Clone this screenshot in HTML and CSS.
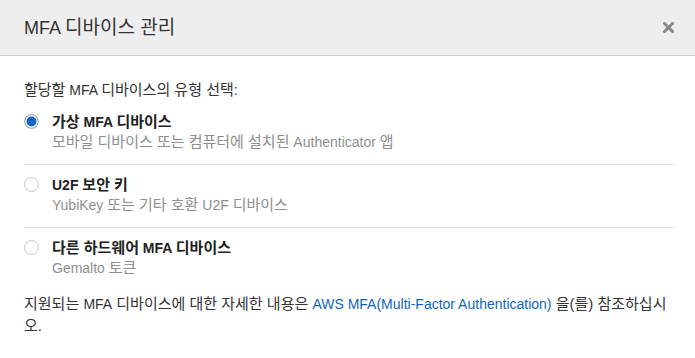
FILE: index.html
```html
<!DOCTYPE html>
<html lang="ko">
<head>
<meta charset="utf-8">
<title>MFA 디바이스 관리</title>
<link rel="stylesheet" href="styles.css">
</head>
<body>
<div class="dialog">
  <div class="header">
    <h1 class="title">MFA <span class="ko">디바이스 관리</span></h1>
    <span class="close" aria-label="닫기">
      <svg width="11" height="11" viewBox="0 0 11 11"><path d="M1.5 1.5 L9.5 9.5 M9.5 1.5 L1.5 9.5" stroke="#888" stroke-width="3" stroke-linecap="square"/></svg>
    </span>
  </div>
  <div class="body">
    <p class="prompt"><span class="ko">할당할</span> MFA <span class="ko">디바이스의 유형 선택</span>:</p>
    <div class="options">
      <label class="option">
        <span class="radio checked"></span>
        <span class="text">
          <span class="label"><span class="ko">가상</span> MFA <span class="ko">디바이스</span></span>
          <span class="desc"><span class="ko">모바일 디바이스 또는 컴퓨터에 설치된</span> Authenticator <span class="ko">앱</span></span>
        </span>
      </label>
      <label class="option">
        <span class="radio"></span>
        <span class="text">
          <span class="label">U2F <span class="ko">보안 키</span></span>
          <span class="desc">YubiKey <span class="ko">또는 기타 호환</span> U2F <span class="ko">디바이스</span></span>
        </span>
      </label>
      <label class="option last">
        <span class="radio"></span>
        <span class="text">
          <span class="label"><span class="ko">다른 하드웨어</span> MFA <span class="ko">디바이스</span></span>
          <span class="desc">Gemalto <span class="ko">토큰</span></span>
        </span>
      </label>
    </div>
    <p class="footer">지원되는 <span class="lat">MFA</span> 디바이스에 대한 자세한 내용은 <a href="#" class="link">AWS MFA(Multi-Factor Authentication)</a> 을(를) 참조하십시오.</p>
  </div>
</div>
</body>
</html>
```
FILE: styles.css
```css
html, body {
  margin: 0;
  padding: 0;
  background: #fff;
}
body {
  font-family: "Liberation Sans", Arial, "Noto Sans CJK KR", sans-serif;
  color: #333;
  font-size: 14px;
}
.ko {
  font-size: 15px;
}
.lat {
  font-size: 14px;
}
.dialog {
  width: 695px;
}
.header {
  height: 56px;
  background: #eeeeee;
  border-bottom: 1px solid #cccccc;
  display: flex;
  align-items: center;
  justify-content: space-between;
  padding: 0 21px 0 24px;
  box-sizing: border-box;
}
.title {
  margin: 0;
  font-size: 18px;
  font-weight: normal;
  color: #333;
  line-height: 22px;
}
.title .ko {
  font-size: 19px;
}
.close {
  display: flex;
  width: 11px;
  height: 11px;
}
.body {
  padding: 24px 21px 0 24px;
}
.prompt {
  margin: 0 0 2px;
  line-height: 20px;
  color: #333;
}
.options {
  display: flex;
  flex-direction: column;
}
.option {
  display: flex;
  align-items: flex-start;
  padding: 10px 0 12px;
  border-bottom: 1px solid #dddddd;
}
.option.last {
  border-bottom: none;
}
.radio {
  width: 15px;
  height: 15px;
  border: 1px solid #c8c8c8;
  border-radius: 50%;
  box-sizing: border-box;
  margin: 2px 13px 0 0;
  flex: none;
  background: #fff;
}
.radio.checked {
  background: #1466c4;
  box-shadow: inset 0 0 0 1.5px #fff;
  border-color: #c4c4c4;
}
.text {
  display: flex;
  flex-direction: column;
}
.label {
  font-weight: bold;
  color: #222;
  line-height: 20px;
}
.desc {
  color: #8e8e8e;
  line-height: 20px;
}
.footer {
  margin: 3px 0 0;
  font-size: 15px;
  line-height: 22px;
  color: #333;
}
.link {
  font-size: 14px;
  color: #1166bb;
  text-decoration: none;
}
```
